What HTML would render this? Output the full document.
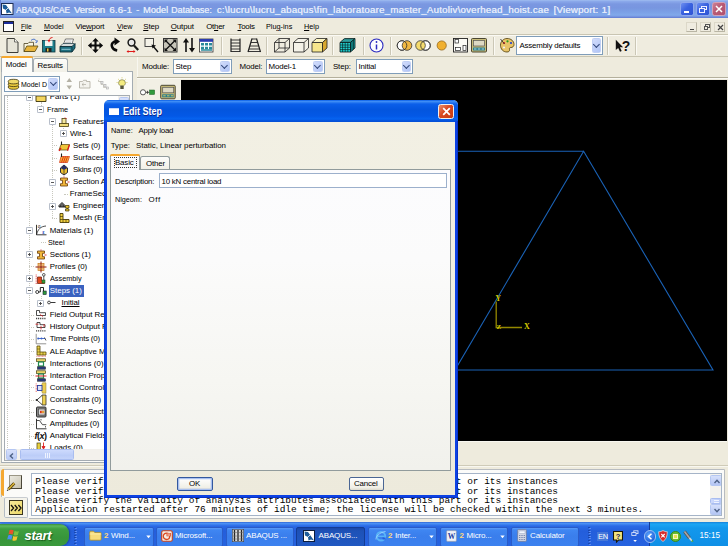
<!DOCTYPE html><html><head><meta charset="utf-8"><title>ABAQUS</title><style>
*{box-sizing:border-box;margin:0;padding:0}
html,body{width:728px;height:546px;overflow:hidden;background:#eeebdd}
body{position:relative;font-family:"Liberation Sans",sans-serif;font-size:7.9px;color:#000;line-height:10px}
.a{position:absolute}
.t{position:absolute;white-space:nowrap;line-height:10px;height:10px;letter-spacing:-0.14px}
.mono{font-family:"Liberation Mono",monospace}
.combo{position:absolute;background:#fff;border:1px solid #7f9db9}
.combo .btn{position:absolute;right:1px;top:1px;bottom:1px;width:9.5px;border-radius:1.5px;background:linear-gradient(135deg,#d2dcfb,#b0c4f6);border:0.5px solid #c0cff4}
.combo .btn:after{content:"";position:absolute;left:50%;top:50%;margin:-3.6px 0 0 -2.5px;width:3.8px;height:3.8px;border-right:1.8px solid #34497c;border-bottom:1.8px solid #34497c;transform:rotate(45deg)}
.sep{position:absolute;background:#cbc7b6;border-right:1px solid #fbfaf4;width:2px}
u{text-decoration:underline}
</style></head><body>
<div class="a" style="left:0;top:0;width:728px;height:18px;background:linear-gradient(#a0bdf0 0,#8aa8ea 1.5px,#7b98e1 4px,#7896e0 8px,#7ba0e6 12px,#80a9ea 15px,#7a9be4 16.3px,#6783d6 17.2px,#6783d6 18px)"></div>
<div class="a" style="left:0;top:0;width:1px;height:18.5px;background:#6a84d8"></div>
<svg class="a" style="left:1px;top:2.5px" width="13" height="12" viewBox="0 0 13 12"><rect x="0.5" y="0.5" width="11.5" height="11" fill="#fff" stroke="#1c2d55" stroke-width="1"/><path d="M1.5 1.5 L5 2 L11 10.5 L8 9.5 L5.5 10.5 L5 7 L2 5.5 Z" fill="#1d5c9a"/><path d="M3 9 L10 2" stroke="#fff" stroke-width="0.8"/></svg>
<div class="t" style="left:16.1px;top:4.7px;font-size:9.7px;color:#e2eafb;text-shadow:0.35px 0 0 #e2eafb;letter-spacing:0px;transform:scaleX(0.8556);transform-origin:0 0">ABAQUS/CAE</div>
<div class="t" style="left:73.8px;top:4.7px;font-size:9.7px;color:#e2eafb;text-shadow:0.35px 0 0 #e2eafb;letter-spacing:-0.185px">Version</div>
<div class="t" style="left:109.2px;top:4.7px;font-size:9.7px;color:#e2eafb;text-shadow:0.35px 0 0 #e2eafb;letter-spacing:0.152px">6.6-1</div>
<div class="t" style="left:136px;top:4.7px;font-size:9.7px;color:#e2eafb;text-shadow:0.35px 0 0 #e2eafb;letter-spacing:0.000px">-</div>
<div class="t" style="left:143px;top:4.7px;font-size:9.7px;color:#e2eafb;text-shadow:0.35px 0 0 #e2eafb;letter-spacing:0px;transform:scaleX(0.9473);transform-origin:0 0">Model</div>
<div class="t" style="left:171.3px;top:4.7px;font-size:9.7px;color:#e2eafb;text-shadow:0.35px 0 0 #e2eafb;letter-spacing:0px;transform:scaleX(0.9214);transform-origin:0 0">Database:</div>
<div class="t" style="left:216.7px;top:4.7px;font-size:9.7px;color:#e2eafb;text-shadow:0.35px 0 0 #e2eafb;letter-spacing:0.228px">c:\lucru\lucru_abaqus\fin_laboratoare_master_Autoliv\overhead_hoist.cae</div>
<div class="t" style="left:553.5px;top:4.7px;font-size:9.7px;color:#e2eafb;text-shadow:0.35px 0 0 #e2eafb;letter-spacing:0.177px">[Viewport:</div>
<div class="t" style="left:601.5px;top:4.7px;font-size:9.7px;color:#e2eafb;text-shadow:0.35px 0 0 #e2eafb;letter-spacing:0.406px">1]</div>
<div class="a" style="left:680px;top:2px;width:13.5px;height:14px;border:1px solid #8fa8ee;border-radius:2.5px;background:linear-gradient(135deg,#6f90f0,#3a62e0 45%,#2f55d4)"><div class="a" style="left:2.5px;top:8px;width:5px;height:2px;background:#fff"></div></div>
<div class="a" style="left:696px;top:2px;width:13.5px;height:14px;border:1px solid #8fa8ee;border-radius:2.5px;background:linear-gradient(135deg,#6f90f0,#3a62e0 45%,#2f55d4)"><div class="a" style="left:4px;top:2.5px;width:5.5px;height:4.5px;border:0.8px solid #eef;border-top-width:1.3px"></div><div class="a" style="left:2px;top:5px;width:5.5px;height:4.5px;border:0.8px solid #eef;border-top-width:1.3px;background:#3a62e0"></div></div>
<div class="a" style="left:712px;top:2px;width:13.5px;height:14px;border:1px solid #d4a0b4;border-radius:2.5px;background:linear-gradient(135deg,#cc8296,#b85a74 45%,#b05270)"><svg class="a" style="left:1.5px;top:1.8px" width="8" height="8" viewBox="0 0 8 8"><path d="M1 1L7 7M7 1L1 7" stroke="#fff" stroke-width="1.5"/></svg></div>
<div class="a" style="left:0;top:18px;width:728px;height:16.5px;background:#eeebdd"></div>
<div class="a" style="left:3px;top:21px;width:11px;height:10.5px;border:1px solid #222;background:#fff;border-bottom-width:1.5px;border-right-width:1.5px"><div class="a" style="left:0;top:0;width:9px;height:2px;background:#1a2c9c"></div></div>
<div class="t" style="left:21.2px;top:22px;letter-spacing:0px;transform:scaleX(0.8483);transform-origin:0 0"><u>F</u>ile</div>
<div class="t" style="left:44.2px;top:22px;letter-spacing:0px;transform:scaleX(0.9071);transform-origin:0 0"><u>M</u>odel</div>
<div class="t" style="left:75.5px;top:22px;letter-spacing:-0.225px">Vie<u>w</u>port</div>
<div class="t" style="left:116.5px;top:22px;letter-spacing:0px;transform:scaleX(0.9136);transform-origin:0 0"><u>V</u>iew</div>
<div class="t" style="left:143.2px;top:22px;letter-spacing:-0.082px"><u>S</u>tep</div>
<div class="t" style="left:170.7px;top:22px;letter-spacing:-0.080px"><u>O</u>utput</div>
<div class="t" style="left:206.2px;top:22px;letter-spacing:-0.241px">Ot<u>h</u>er</div>
<div class="t" style="left:237.5px;top:22px;letter-spacing:-0.234px"><u>T</u>ools</div>
<div class="t" style="left:266.2px;top:22px;letter-spacing:0px;transform:scaleX(0.9220);transform-origin:0 0">Plu<u>g</u>-ins</div>
<div class="t" style="left:304px;top:22px;letter-spacing:0px;transform:scaleX(0.9232);transform-origin:0 0"><u>H</u>elp</div>
<div class="a" style="left:686px;top:21.5px;width:11px;height:10px;border:0.5px solid #dcd8c8;border-right-color:#b9b5a4;border-bottom-color:#b9b5a4;background:#efece0"><div class="a" style="left:3px;top:6px;width:4px;height:1.2px;background:#444"></div></div>
<div class="a" style="left:700px;top:21.5px;width:11px;height:10px;border:0.5px solid #dcd8c8;border-right-color:#b9b5a4;border-bottom-color:#b9b5a4;background:#efece0"><div class="a" style="left:4px;top:1px;width:4.5px;height:4px;border:0.8px solid #555;border-top-width:1.2px"></div><div class="a" style="left:2.5px;top:3px;width:4.5px;height:4px;border:0.8px solid #555;border-top-width:1.2px;background:#efece0"></div></div>
<div class="a" style="left:714px;top:21.5px;width:11px;height:10px;border:0.5px solid #dcd8c8;border-right-color:#b9b5a4;border-bottom-color:#b9b5a4;background:#efece0"><svg class="a" style="left:1.7px;top:1px" width="7" height="7" viewBox="0 0 7 7"><path d="M1 1L6 6M6 1L1 6" stroke="#444" stroke-width="1.2"/></svg></div>
<div class="a" style="left:0;top:34px;width:728px;height:22.5px;background:#efecdf;border-top:1px solid #c9c5b2;border-bottom:1px solid #c9c5b2"></div>
<div class="a" style="left:0;top:35px;width:728px;height:1px;background:#fbfaf4"></div>
<div class="a" style="left:0;top:56.5px;width:728px;height:1px;background:#fbfaf4"></div>
<svg class="a" style="left:0;top:35px" width="728" height="22" viewBox="0 35 728 22">
<!-- new -->
<path d="M7 38.500h7.500l3.500 3.500v10.500H7z" fill="#e6e4d8" stroke="#3c3c38" stroke-width="1"/><path d="M14.500 38.500v3.500h3.500" fill="#f8f8f2" stroke="#3c3c38" stroke-width="0.700"/>
<!-- open -->
<path d="M24 43.500h4l1-1.200h4.500v9.200H24z" fill="#f8f4e0" stroke="#4a4020" stroke-width="0.800"/><path d="M24 51.500l2.800-5.500h11.200L35 51.500z" fill="#e8b43c" stroke="#5a4a10" stroke-width="0.800"/><path d="M31 40.500c2-2 4.500-1.500 5.500.8" fill="none" stroke="#3a68c8" stroke-width="1"/><path d="M35.500 42.500l1.500-.3.300-1.800" fill="none" stroke="#3a68c8" stroke-width="0.900"/>
<!-- save -->
<rect x="42.500" y="40.500" width="12.500" height="11.500" fill="#1f7f8c" stroke="#10353c" stroke-width="0.800"/><rect x="45" y="40.500" width="7.500" height="5.500" fill="#f4f4f0"/><rect x="45.500" y="48" width="6" height="4" fill="#222"/><rect x="47" y="48.500" width="1.500" height="3" fill="#e8c840"/><path d="M52.500 37.500c-2 .2-3.300 1.200-3.500 3.200" fill="none" stroke="#e01818" stroke-width="1"/><path d="M47.500 40l1.500 2.500 1.500-2.500z" fill="#e01818"/>
<!-- print -->
<path d="M63.500 44l2-5h8l-1.500 5z" fill="#fff" stroke="#444" stroke-width="0.700"/><path d="M65.500 41h6M65 42.500h6" stroke="#888" stroke-width="0.500"/><path d="M60 46.500l3-3h11l1 1.500-3 3.500z" fill="#d8dcdc" stroke="#1a3a44" stroke-width="0.700"/><path d="M60 46.500h12l3-3v4.500l-3 4H60z" fill="#1f6f80" stroke="#0c2c34" stroke-width="0.900"/><path d="M72 46.500v5.500" stroke="#0c2c34" stroke-width="0.700"/><path d="M61.500 49.300h9" stroke="#9fd0dc" stroke-width="0.900"/>
<!-- pan -->
<path d="M95.50 37.90 L98.80 41.60 L96.55 41.60 L96.55 44.45 L99.40 44.45 L99.40 42.20 L103.10 45.50 L99.40 48.80 L99.40 46.55 L96.55 46.55 L96.55 49.40 L98.80 49.40 L95.50 53.10 L92.20 49.40 L94.45 49.40 L94.45 46.55 L91.60 46.55 L91.60 48.80 L87.90 45.50 L91.60 42.20 L91.60 44.45 L94.45 44.45 L94.45 41.60 L92.20 41.60Z" fill="#0a0a0a"/>
<!-- rotate -->
<path d="M117.500 41.800c-3.800-1-6.500 1.500-5.500 4.800.6 2 2.500 3.500 5.200 4" fill="none" stroke="#0a0a0a" stroke-width="2.500"/><path d="M114.500 37.500l5.500 4-5.500 4z" fill="#0a0a0a"/>
<!-- zoom -->
<circle cx="131.500" cy="42.500" r="3.400" fill="#e8e8e8" stroke="#1a1a1a" stroke-width="1.500"/><path d="M134 45.500l4.200 4.500" stroke="#1a1a1a" stroke-width="2.200"/><path d="M127.500 51.500h7" stroke="#e01818" stroke-width="1"/><path d="M126.500 51.500l2-1.500v3zM135.500 51.500l-2-1.500v3z" fill="#e01818"/>
<!-- zoom box -->
<rect x="145" y="38.500" width="8.500" height="8" fill="#f4f2e8" stroke="#333" stroke-width="0.900"/><path d="M152.500 45.500l5.500 6.500" stroke="#111" stroke-width="1.400"/><path d="M151.500 44.500l4.500 1-3.500 3z" fill="#111"/>
<!-- fit -->
<rect x="163.500" y="38.500" width="13.500" height="13.500" fill="#c8c6ba" stroke="#333" stroke-width="1"/><path d="M165.500 40.500l9.500 9.500M175 40.500l-9.500 9.500" stroke="#111" stroke-width="1.300"/><path d="M164.500 39.500h3.500l-3.500 3.500zM176 39.500h-3.500l3.500 3.500zM164.500 51h3.500l-3.500-3.500zM176 51h-3.500l3.500-3.500z" fill="#111"/>
<!-- up-down -->
<path d="M186 52V41" stroke="#111" stroke-width="1.600"/><path d="M183 42.500l3-4.500 3 4.500z" fill="#111"/><path d="M192 38v11" stroke="#111" stroke-width="1.600"/><path d="M189 48l3 4.500 3-4.500z" fill="#111"/>
<!-- grid -->
<rect x="199.500" y="39" width="13.500" height="13" fill="#fff" stroke="#333" stroke-width="0.800"/><rect x="199.500" y="39" width="13.500" height="2.800" fill="#2a3cb0"/><path d="M201 43h3v2.500h-3zM205 43h3v2.500h-3zM209 43h3v2.500h-3zM201 46.700h3v2.500h-3zM205 46.700h3v2.500h-3zM209 46.700h3v2.500h-3z" fill="#2a8a9a"/><path d="M201 50h11" stroke="#2a8a9a" stroke-width="1.500"/>
<!-- ladder -->
<path d="M231 38.500v13.500M240 38.500v13.500" stroke="#222" stroke-width="1.200"/><path d="M231 40h9M231 43h9M231 46h9M231 49h9M231 51.500h9" stroke="#222" stroke-width="0.900"/>
<!-- persp ladder -->
<path d="M252 38.500L248 52M256.500 38.500L260.500 52" stroke="#222" stroke-width="1.200"/><path d="M252 39h4.500M251 42.500h6.500M250 46h8.500M249 49h10.500M248 51.500h12.500" stroke="#222" stroke-width="0.900"/>
<!-- wire cube -->
<path d="M274.500 42.500h10.500v9.500h-10.500zM274.500 42.500l4.500-4h10.500l-4.500 4M285 52l4.500-4v-9.500M279 38.500v9.500h10.500M279 48l-4.500 4" fill="none" stroke="#222" stroke-width="0.800"/>
<!-- hidden cube -->
<path d="M293.500 42.500h10.500v9.500h-10.500zM293.500 42.500l4.500-4h10.500l-4.500 4M304 52l4.500-4v-9.500" fill="#f4f2e8" stroke="#222" stroke-width="0.800"/>
<!-- shaded cube -->
<path d="M312 42.500h10.500v9.500H312z" fill="#f6e68c" stroke="#222" stroke-width="0.800"/><path d="M312 42.500l4.500-4H327l-4.500 4z" fill="#fbf4c0" stroke="#222" stroke-width="0.800"/><path d="M322.500 52l4.500-4v-9.500l-4.500 4z" fill="#d8a830" stroke="#222" stroke-width="0.800"/>
<!-- mesh cube -->
<path d="M340 42.500h10.500v9.500H340z" fill="#22d4d4" stroke="#061818" stroke-width="0.800"/><path d="M340 42.500l4.500-4H355l-4.500 4z" fill="#48e8e8" stroke="#061818" stroke-width="0.800"/><path d="M350.500 52l4.500-4v-9.500l-4.500 4z" fill="#16a8a8" stroke="#061818" stroke-width="0.800"/><path d="M342.600 42.500v9.500M345.200 42.500v9.500M347.800 42.500v9.500M340 45h10.500M340 47.300h10.500M340 49.600h10.500M352 41.200v9.500M353.500 39.800v9.500M341.500 41.200h10.500M343 39.800h10.500" stroke="#061818" stroke-width="0.650"/>
<!-- info -->
<circle cx="376.500" cy="45.500" r="6.500" fill="#fdfdff" stroke="#2a2ac0" stroke-width="1.100"/><path d="M376.500 44.500v5" stroke="#2a2ac0" stroke-width="1.500"/><circle cx="376.500" cy="42" r="0.900" fill="#2a2ac0"/>
<!-- circles 1 -->
<circle cx="402" cy="45.500" r="4.800" fill="#fff" stroke="#333" stroke-width="0.800"/><circle cx="407" cy="45.500" r="4.800" fill="#f0b030" fill-opacity="0.900" stroke="#333" stroke-width="0.800"/><circle cx="402" cy="45.500" r="4.800" fill="none" stroke="#333" stroke-width="0.800"/>
<!-- circles 2 -->
<circle cx="425.500" cy="45.500" r="4.800" fill="#fff" stroke="#333" stroke-width="0.800"/><circle cx="420.500" cy="45.500" r="4.800" fill="#f4d860" fill-opacity="0.900" stroke="#333" stroke-width="0.800"/><circle cx="425.500" cy="45.500" r="4.800" fill="none" stroke="#333" stroke-width="0.800"/>
<!-- ball -->
<circle cx="441.700" cy="45.500" r="4.600" fill="#f0b030" stroke="#8a5a10" stroke-width="0.700"/>
<!-- boxes -->
<rect x="453.500" y="38.500" width="14" height="13.500" fill="#fbfaf4" stroke="#222" stroke-width="0.900"/><rect x="455" y="39.500" width="3.500" height="3.500" fill="#fff" stroke="#222" stroke-width="0.700"/><rect x="455.500" y="47.500" width="5" height="3" fill="#fff" stroke="#222" stroke-width="0.700"/><rect x="463" y="45.500" width="3" height="5" fill="#fff" stroke="#222" stroke-width="0.700"/>
<!-- monitor -->
<rect x="471.500" y="38.500" width="15" height="13.500" rx="1" fill="#c9bd7a" stroke="#4a4632" stroke-width="1"/><rect x="473.500" y="40.500" width="11" height="5.500" fill="#ddd9c4" stroke="#555" stroke-width="0.700"/><rect x="473" y="47.500" width="12" height="3" fill="#2a7c8c"/><path d="M474 49h2.500M477.800 49h2.500M481.600 49h2.500" stroke="#bfe8ee" stroke-width="0.900"/>
<!-- palette -->
<path d="M507 38.500c4 0 7 2.500 7 6 0 2-1.500 3-3 3-1.200 0-1.800.6-1.500 1.800.4 1.500-.5 2.700-2.500 2.700-4 0-6.500-3-6.500-6.800 0-3.700 3-6.700 6.500-6.700z" fill="#e8c468" stroke="#4a3808" stroke-width="0.800"/><circle cx="504" cy="43" r="1.100" fill="#d82020"/><circle cx="507.500" cy="41.300" r="1.100" fill="#20a020"/><circle cx="511" cy="43" r="1.100" fill="#2040d0"/><circle cx="504" cy="47.500" r="1.100" fill="#f0f0f0"/><path d="M500.500 39l4 5" stroke="#333" stroke-width="0.900"/>
<!-- arrow ? -->
<path d="M615.800 39.800v10.200l2.400-2 1.800 3.800 1.700-.8-1.800-3.700h3.200z" fill="#111"/><text x="621.800" y="50.600" font-family="Liberation Sans" font-weight="bold" font-size="14" fill="#111">?</text>
</svg>

<div class="sep" style="left:81px;top:36.5px;height:18.5px"></div>
<div class="sep" style="left:221px;top:36.5px;height:18.5px"></div>
<div class="sep" style="left:266px;top:36.5px;height:18.5px"></div>
<div class="sep" style="left:332px;top:36.5px;height:18.5px"></div>
<div class="sep" style="left:363px;top:36.5px;height:18.5px"></div>
<div class="sep" style="left:390px;top:36.5px;height:18.5px"></div>
<div class="sep" style="left:493px;top:36.5px;height:18.5px"></div>
<div class="sep" style="left:607px;top:36.5px;height:18.5px"></div>
<div class="sep" style="left:635px;top:36.5px;height:18.5px"></div>
<div class="combo" style="left:516px;top:36px;width:87px;height:19px"><div class="t" style="left:2.500px;top:3.800px;letter-spacing:-0.190px">Assembly defaults</div><div class="btn"></div></div>
<div class="a" style="left:0;top:56.5px;width:728px;height:23.5px;background:#eeebdd"></div>
<div class="t" style="left:142px;top:61.5px">Module:</div>
<div class="combo" style="left:173px;top:59px;width:58.5px;height:14.5px"><div class="t" style="left:1.5px;top:1.6px">Step</div><div class="btn"></div></div>
<div class="t" style="left:239.5px;top:61.5px">Model:</div>
<div class="combo" style="left:266px;top:59px;width:58.5px;height:14.5px"><div class="t" style="left:1.5px;top:1.6px">Model-1</div><div class="btn"></div></div>
<div class="t" style="left:333px;top:61.5px">Step:</div>
<div class="combo" style="left:356px;top:59px;width:57px;height:14.5px"><div class="t" style="left:1.5px;top:1.6px">Initial</div><div class="btn"></div></div>
<div class="a" style="left:1px;top:71px;width:131.5px;height:391.5px;background:#fcfcf9;border:1px solid #a4acb2;border-left-color:#b4babc"></div>
<div class="a" style="left:33px;top:58px;width:34.5px;height:13.5px;border:1px solid #a4acb2;border-bottom:none;border-radius:2.5px 2.5px 0 0;background:linear-gradient(#fdfdfb,#f1f0e7)"></div>
<div class="t" style="left:37.5px;top:61px">Results</div>
<div class="a" style="left:1px;top:56px;width:32px;height:16px;border:1px solid #a4acb2;border-bottom:none;border-top:none;border-radius:2.5px 2.5px 0 0;background:#fcfcf9"><div class="a" style="left:-1px;top:0;width:32px;height:2px;background:#f5a830;border-radius:2.5px 2.5px 0 0"></div></div>
<div class="t" style="left:5.8px;top:60px">Model</div>
<div class="combo" style="left:4px;top:75.5px;width:56px;height:16.5px"><svg class="a" style="left:2px;top:1.5px" width="13" height="12" viewBox="0 0 13 12"><ellipse cx="6.5" cy="9" rx="5.3" ry="2.3" fill="#e8c83c" stroke="#3c3410" stroke-width="0.8"/><ellipse cx="6.5" cy="6.3" rx="5.3" ry="2.3" fill="#e8c83c" stroke="#3c3410" stroke-width="0.8"/><ellipse cx="6.5" cy="3.6" rx="5.3" ry="2.3" fill="#f0da6a" stroke="#3c3410" stroke-width="0.8"/></svg><div class="t" style="left:16px;top:3px;letter-spacing:0px;transform:scaleX(0.8848);transform-origin:0 0">Model D</div><div class="btn" style="width:10px"></div></div>
<svg class="a" style="left:64px;top:76px" width="66" height="16" viewBox="64 76 66 16"><path d="M66.5 82 L69.3 78 L72 82Z M66.5 85.5 L69.3 89.5 L72 85.5Z" fill="#b4b1a4"/><path d="M79.5 81.5h3l1-1.2h3v1.2h3.5v6.5h-10.5z" fill="#f4f3ee" stroke="#aeaba0" stroke-width="0.8"/><path d="M82 84.5h4M83.7 83l-1.7 1.5 1.7 1.5" stroke="#aeaba0" stroke-width="0.7" fill="none"/><path d="M98.5 79v2.5h2.5v3h2.5v3h2.5" stroke="#b8b5aa" stroke-width="0.7" fill="none"/><rect x="98" y="78" width="2" height="2" fill="#f4f3ee" stroke="#b0ad a2" stroke-width="0.6"/><rect x="101" y="81.5" width="2" height="2" fill="#eee" stroke="#aaa" stroke-width="0.6"/><rect x="104" y="84.5" width="2" height="2" fill="#eee" stroke="#aaa" stroke-width="0.6"/><rect x="106.3" y="87" width="2" height="2" fill="#eee" stroke="#aaa" stroke-width="0.6"/><path d="M122 78.3v-1M118.8 79.6l-.8-.7M125.2 79.6l.8-.7M117.6 82.5h-1M126.4 82.5h1" stroke="#c8bc40" stroke-width="0.7"/><path d="M120.2 85.8c-1.200-1-1.600-1.900-1.600-2.800a3.400 3.300 0 0 1 6.800 0c0 .9-.4 1.800-1.600 2.800z" fill="#f4ec80" stroke="#7a7a48" stroke-width="0.7"/><rect x="120.300" y="85.800" width="3.400" height="3.200" fill="#55553c"/></svg>
<div class="a" style="left:4px;top:95px;width:125.5px;height:366px;background:#fff;border:1px solid #a5acb2;overflow:hidden" id="tree">
<div class="a" style="left:1.5px;top:0.0px;width:0;height:352.0px;border-left:0.7px dotted #c8c8be"></div>
<div class="a" style="left:24.1px;top:7.0px;width:0;height:345.0px;border-left:0.7px dotted #c8c8be"></div>
<div class="a" style="left:35.6px;top:6.0px;width:0;height:4.0px;border-left:0.7px dotted #c8c8be"></div>
<div class="a" style="left:35.6px;top:200.0px;width:0;height:3.0px;border-left:0.7px dotted #c8c8be"></div>
<div class="a" style="left:47.1px;top:29.0px;width:0;height:93.0px;border-left:0.7px dotted #c8c8be"></div>
<div class="a" style="left:58.4px;top:29.0px;width:0;height:4.0px;border-left:0.7px dotted #c8c8be"></div>
<div class="t" style="left:44.8px;top:-3.6px;letter-spacing:-0.03px;">Parts (1)</div>
<svg class="a" style="left:20.9px;top:-2.2px" width="7" height="7" viewBox="0 0 7 7"><rect x="0.4" y="0.4" width="6.2" height="6.2" rx="0.8" fill="#fff" stroke="#98a2b4" stroke-width="0.8"/><path d="M2 3.5h3" stroke="#444" stroke-width="0.9"/></svg>
<svg class="a" style="left:29.8px;top:-4.7px" width="12" height="12" viewBox="0 0 12 12"><path d="M1 3h3.5l1 1.2H11v6.3H1z" fill="#f3d55e" stroke="#3a3208" stroke-width="0.9"/><path d="M1 5.2h10" stroke="#3a3208" stroke-width="0.6"/></svg>
<div class="t" style="left:42.1px;top:8.5px;letter-spacing:0px;transform:scaleX(0.9251);transform-origin:0 0">Frame</div>
<svg class="a" style="left:32.4px;top:9.9px" width="7" height="7" viewBox="0 0 7 7"><rect x="0.4" y="0.4" width="6.2" height="6.2" rx="0.8" fill="#fff" stroke="#98a2b4" stroke-width="0.8"/><path d="M2 3.5h3" stroke="#444" stroke-width="0.9"/></svg>
<div class="t" style="left:68.0px;top:20.6px;letter-spacing:-0.03px;">Features</div>
<svg class="a" style="left:43.9px;top:22.0px" width="7" height="7" viewBox="0 0 7 7"><rect x="0.4" y="0.4" width="6.2" height="6.2" rx="0.8" fill="#fff" stroke="#98a2b4" stroke-width="0.8"/><path d="M2 3.5h3" stroke="#444" stroke-width="0.9"/></svg>
<svg class="a" style="left:53.0px;top:19.5px" width="12" height="12" viewBox="0 0 12 12"><rect x="1.5" y="7.5" width="9" height="3" fill="#f0dc78" stroke="#4a4010" stroke-width="0.8"/><rect x="4" y="2.5" width="4" height="5" fill="#f4e8a0" stroke="#4a4010" stroke-width="0.8"/><path d="M7 1.5l1.5 1.5" stroke="#d22" stroke-width="0.9"/></svg>
<div class="t" style="left:65.0px;top:32.7px;letter-spacing:-0.149px">Wire-1</div>
<svg class="a" style="left:55.1px;top:34.1px" width="7" height="7" viewBox="0 0 7 7"><rect x="0.4" y="0.4" width="6.2" height="6.2" rx="0.8" fill="#fff" stroke="#98a2b4" stroke-width="0.8"/><path d="M2 3.5h3" stroke="#444" stroke-width="0.9"/><path d="M3.5 2v3" stroke="#444" stroke-width="0.9"/></svg>
<div class="t" style="left:68.0px;top:44.8px;letter-spacing:-0.019px">Sets (0)</div>
<svg class="a" style="left:52.5px;top:43.7px" width="12" height="12" viewBox="0 0 12 12"><path d="M3 4.5h8.5L9.5 10H1z" fill="#efc53a" stroke="#5a4608" stroke-width="0.7"/><path d="M3.5 5V1.5" stroke="#222" stroke-width="1.1"/><path d="M1 10.8L3 8M9.5 10.8l2-6" stroke="#e01818" stroke-width="1.3"/></svg>
<div class="a" style="left:47.4px;top:49.4px;height:0;width:4.6px;border-top:0.7px dotted #c8c8be"></div>
<div class="t" style="left:68.0px;top:56.9px;letter-spacing:-0.03px;">Surfaces</div>
<svg class="a" style="left:52.5px;top:55.8px" width="12" height="12" viewBox="0 0 12 12"><path d="M3 4.5h8.5L9.5 10.5H1.5z" fill="#f3b238" stroke="#d63010" stroke-width="0.7"/><path d="M3.5 5V1.5" stroke="#222" stroke-width="1.1"/><path d="M3.5 10.5l2-6M5.5 10.5l2-6M7.5 10.5l2-6" stroke="#e02810" stroke-width="0.9"/></svg>
<div class="a" style="left:47.4px;top:61.5px;height:0;width:4.6px;border-top:0.7px dotted #c8c8be"></div>
<div class="t" style="left:68.0px;top:69.0px;letter-spacing:-0.204px">Skins (0)</div>
<svg class="a" style="left:52.5px;top:67.9px" width="12" height="12" viewBox="0 0 12 12"><path d="M6 1l3.5 3v4.5L6 11 2.5 8.5V4z" fill="#efc030" stroke="#1a1a2a" stroke-width="0.9"/><path d="M6 1l3.5 3L6 6 2.5 4z" fill="#2a2f66"/><path d="M6 6v5" stroke="#1a1a2a" stroke-width="0.7"/></svg>
<div class="a" style="left:47.4px;top:73.6px;height:0;width:4.6px;border-top:0.7px dotted #c8c8be"></div>
<div class="t" style="left:68.0px;top:81.1px;letter-spacing:-0.03px;">Section Assignments</div>
<svg class="a" style="left:43.9px;top:82.5px" width="7" height="7" viewBox="0 0 7 7"><rect x="0.4" y="0.4" width="6.2" height="6.2" rx="0.8" fill="#fff" stroke="#98a2b4" stroke-width="0.8"/><path d="M2 3.5h3" stroke="#444" stroke-width="0.9"/></svg>
<svg class="a" style="left:52.5px;top:80.0px" width="12" height="12" viewBox="0 0 12 12"><path d="M2.5 2h7v2.3H7.5v3.4h2V10h-7V7.7h2V4.3h-2z" fill="#f1b73a" stroke="#6a3a08" stroke-width="0.8"/><path d="M6 0.5v1M9.5 6h2" stroke="#d22" stroke-width="0.9"/></svg>
<div class="t" style="left:64.8px;top:93.2px;letter-spacing:-0.03px;">FrameSection</div>
<div class="a" style="left:58.7px;top:97.8px;height:0;width:4.6px;border-top:0.7px dotted #c8c8be"></div>
<div class="t" style="left:68.0px;top:105.3px;letter-spacing:-0.03px;">Engineering Features</div>
<svg class="a" style="left:43.9px;top:106.7px" width="7" height="7" viewBox="0 0 7 7"><rect x="0.4" y="0.4" width="6.2" height="6.2" rx="0.8" fill="#fff" stroke="#98a2b4" stroke-width="0.8"/><path d="M2 3.5h3" stroke="#444" stroke-width="0.9"/><path d="M3.5 2v3" stroke="#444" stroke-width="0.9"/></svg>
<svg class="a" style="left:52.5px;top:104.2px" width="12" height="12" viewBox="0 0 12 12"><path d="M1 7V5.5L4 2.5l3 3V7z" fill="#888" stroke="#111" stroke-width="0.9"/><path d="M2.5 7V5M4 7V4M5.5 7V5" stroke="#111" stroke-width="0.6"/><path d="M7.5 5.5H11V8H9.5v1H11v2H7.5V9H9V8H7.5z" fill="#ecc22e" stroke="#3a3005" stroke-width="0.7"/></svg>
<div class="t" style="left:68.0px;top:117.4px;letter-spacing:-0.03px;">Mesh (Empty)</div>
<svg class="a" style="left:53.0px;top:116.3px" width="12" height="12" viewBox="0 0 12 12"><path d="M2 1.5h3v6h6v3H2z" fill="#f0d040" stroke="#4a3c08" stroke-width="0.9"/><path d="M2 4.5h3M2 7.5h3M5 7.5v3M8 7.5v3" stroke="#4a3c08" stroke-width="0.7"/></svg>
<div class="a" style="left:47.4px;top:122.0px;height:0;width:5.1px;border-top:0.7px dotted #c8c8be"></div>
<div class="t" style="left:44.8px;top:129.5px;letter-spacing:-0.029px">Materials (1)</div>
<svg class="a" style="left:20.9px;top:130.9px" width="7" height="7" viewBox="0 0 7 7"><rect x="0.4" y="0.4" width="6.2" height="6.2" rx="0.8" fill="#fff" stroke="#98a2b4" stroke-width="0.8"/><path d="M2 3.5h3" stroke="#444" stroke-width="0.9"/></svg>
<svg class="a" style="left:29.8px;top:128.4px" width="12" height="12" viewBox="0 0 12 12"><path d="M1.5 0.8v10h10" fill="none" stroke="#222" stroke-width="0.9"/><path d="M1.5 10.8C3 5 5.5 2.5 11 2" fill="none" stroke="#222" stroke-width="0.8"/><text x="2.8" y="4.2" font-size="4.5" font-family="Liberation Sans" fill="#111">σ</text><text x="7.2" y="9.8" font-size="5" font-family="Liberation Sans" fill="#1a3cc0" font-weight="bold">ε</text></svg>
<div class="t" style="left:42.5px;top:141.6px;letter-spacing:0px;transform:scaleX(0.9168);transform-origin:0 0">Steel</div>
<div class="a" style="left:35.9px;top:146.2px;height:0;width:5.1px;border-top:0.7px dotted #c8c8be"></div>
<div class="t" style="left:44.8px;top:153.7px;letter-spacing:-0.082px">Sections (1)</div>
<svg class="a" style="left:20.9px;top:155.1px" width="7" height="7" viewBox="0 0 7 7"><rect x="0.4" y="0.4" width="6.2" height="6.2" rx="0.8" fill="#fff" stroke="#98a2b4" stroke-width="0.8"/><path d="M2 3.5h3" stroke="#444" stroke-width="0.9"/><path d="M3.5 2v3" stroke="#444" stroke-width="0.9"/></svg>
<svg class="a" style="left:29.8px;top:152.6px" width="12" height="12" viewBox="0 0 12 12"><path d="M2.5 2h7v2.3H7.5v3.4h2V10h-7V7.7h2V4.3h-2z" fill="#f1b73a" stroke="#6a3a08" stroke-width="0.8"/><path d="M6 0.5v1M9.5 6h2" stroke="#d22" stroke-width="0.9"/></svg>
<div class="t" style="left:44.8px;top:165.8px;letter-spacing:-0.068px">Profiles (0)</div>
<svg class="a" style="left:29.8px;top:164.7px" width="12" height="12" viewBox="0 0 12 12"><rect x="3" y="2.5" width="6" height="7" fill="#f4c890" stroke="#c8781c" stroke-width="0.7"/><path d="M0.5 6h11M6 0.5v11" stroke="#8a1a10" stroke-width="1"/><path d="M3 4.2h6M3 7.8h6" stroke="#d88a30" stroke-width="0.6"/></svg>
<div class="a" style="left:24.4px;top:170.4px;height:0;width:4.9px;border-top:0.7px dotted #c8c8be"></div>
<div class="t" style="left:44.8px;top:177.9px;letter-spacing:0px;transform:scaleX(0.9236);transform-origin:0 0">Assembly</div>
<svg class="a" style="left:20.9px;top:179.3px" width="7" height="7" viewBox="0 0 7 7"><rect x="0.4" y="0.4" width="6.2" height="6.2" rx="0.8" fill="#fff" stroke="#98a2b4" stroke-width="0.8"/><path d="M2 3.5h3" stroke="#444" stroke-width="0.9"/><path d="M3.5 2v3" stroke="#444" stroke-width="0.9"/></svg>
<svg class="a" style="left:29.8px;top:176.8px" width="12" height="12" viewBox="0 0 12 12"><path d="M2.5 4v6.5h7V7.5h-3V4z" fill="#e0461c" stroke="#6a1a08" stroke-width="0.7"/><path d="M1.2 1.5v9.5" stroke="#d22" stroke-width="0.8" stroke-dasharray="1 0.7"/><rect x="7" y="7" width="3" height="3" fill="#3a9a3a" stroke="#154a15" stroke-width="0.5"/><circle cx="8.8" cy="1.8" r="1.3" fill="#fff" stroke="#111" stroke-width="0.7"/><path d="M8.8 3v4" stroke="#111" stroke-width="0.7"/></svg>
<div class="a" style="left:44.1px;top:189.0px;width:34.6px;height:11.6px;background:#3a62c0"></div>
<div class="t" style="left:44.8px;top:190.0px;color:#fff;letter-spacing:0.009px">Steps (1)</div>
<svg class="a" style="left:20.9px;top:191.4px" width="7" height="7" viewBox="0 0 7 7"><rect x="0.4" y="0.4" width="6.2" height="6.2" rx="0.8" fill="#fff" stroke="#98a2b4" stroke-width="0.8"/><path d="M2 3.5h3" stroke="#444" stroke-width="0.9"/></svg>
<svg class="a" style="left:29.8px;top:188.9px" width="12" height="12" viewBox="0 0 12 12"><circle cx="2.2" cy="7" r="1.5" fill="#fff" stroke="#111" stroke-width="0.8"/><path d="M3.8 7h1.5V2.5h3.2V7" fill="none" stroke="#111" stroke-width="0.9"/><rect x="8" y="6" width="3.2" height="3.5" fill="#2f9a3c" stroke="#123" stroke-width="0.6"/></svg>
<div class="t" style="left:56.5px;top:202.1px;letter-spacing:-0.056px"><u>Initial</u></div>
<svg class="a" style="left:32.4px;top:203.5px" width="7" height="7" viewBox="0 0 7 7"><rect x="0.4" y="0.4" width="6.2" height="6.2" rx="0.8" fill="#fff" stroke="#98a2b4" stroke-width="0.8"/><path d="M2 3.5h3" stroke="#444" stroke-width="0.9"/><path d="M3.5 2v3" stroke="#444" stroke-width="0.9"/></svg>
<svg class="a" style="left:41.5px;top:201.0px" width="12" height="12" viewBox="0 0 12 12"><circle cx="2" cy="5.5" r="1.4" fill="#fff" stroke="#222" stroke-width="0.8"/><path d="M3.5 5.5H8.5" stroke="#222" stroke-width="0.9"/></svg>
<div class="t" style="left:44.8px;top:214.2px;letter-spacing:-0.03px;">Field Output Requests</div>
<svg class="a" style="left:29.8px;top:213.1px" width="12" height="12" viewBox="0 0 12 12"><path d="M1.5 1.5h3v2.2h6V6.5h-9z" fill="#fff" stroke="#222" stroke-width="0.8"/><path d="M1 9.5h10" stroke="#444" stroke-width="1.3" stroke-dasharray="1.1 0.8"/><path d="M5 5.5l3 2" stroke="#d22" stroke-width="0.8"/></svg>
<div class="a" style="left:24.4px;top:218.8px;height:0;width:4.9px;border-top:0.7px dotted #c8c8be"></div>
<div class="t" style="left:44.8px;top:226.3px;letter-spacing:-0.03px;">History Output Requests</div>
<svg class="a" style="left:29.8px;top:225.2px" width="12" height="12" viewBox="0 0 12 12"><path d="M2 1.5h3v2.2h5V6.5H2z" fill="#fff" stroke="#222" stroke-width="0.8"/><path d="M1 9.8h10" stroke="#444" stroke-width="1.3" stroke-dasharray="1.1 0.8"/><path d="M0.5 3.2h3M6 5v3.5M9 3v3" stroke="#d22" stroke-width="0.8"/></svg>
<div class="a" style="left:24.4px;top:230.9px;height:0;width:4.9px;border-top:0.7px dotted #c8c8be"></div>
<div class="t" style="left:44.8px;top:238.4px;letter-spacing:-0.208px">Time Points (0)</div>
<svg class="a" style="left:29.8px;top:237.3px" width="12" height="12" viewBox="0 0 12 12"><path d="M1.2 0.8v10h10" fill="none" stroke="#888" stroke-width="0.9"/><path d="M3 5.5h7" stroke="#3a62c8" stroke-width="0.9"/><circle cx="3.2" cy="5.5" r="1" fill="#3a62c8"/><circle cx="6.5" cy="5.5" r="0.9" fill="#3a62c8"/><path d="M9.5 4.5l1.5 3" stroke="#222" stroke-width="0.8"/></svg>
<div class="a" style="left:24.4px;top:243.0px;height:0;width:4.9px;border-top:0.7px dotted #c8c8be"></div>
<div class="t" style="left:44.8px;top:250.5px;letter-spacing:-0.03px;">ALE Adaptive Mesh</div>
<svg class="a" style="left:29.8px;top:249.4px" width="12" height="12" viewBox="0 0 12 12"><path d="M2 1h3v6h6v3H2z" fill="#ead24a" stroke="#5a4a0a" stroke-width="0.8"/><path d="M5 7v3M8 7v3M2 4h3M2 7h3" stroke="#5a4a0a" stroke-width="0.6"/><path d="M1.5 11.2h9.5" stroke="#d22" stroke-width="0.8" stroke-dasharray="0.8 0.6"/></svg>
<div class="a" style="left:24.4px;top:255.1px;height:0;width:4.9px;border-top:0.7px dotted #c8c8be"></div>
<div class="t" style="left:44.8px;top:262.6px;letter-spacing:0.078px">Interactions (0)</div>
<svg class="a" style="left:29.8px;top:261.5px" width="12" height="12" viewBox="0 0 12 12"><rect x="1.5" y="0.8" width="9" height="2.6" fill="#e8d46a" stroke="#4a4010" stroke-width="0.7"/><rect x="3.5" y="4" width="5" height="4" fill="#fff" stroke="#1f8a50" stroke-width="1.2"/><rect x="2.5" y="8.8" width="8" height="2.4" fill="#2a3a7a" stroke="#111" stroke-width="0.5"/></svg>
<div class="a" style="left:24.4px;top:267.2px;height:0;width:4.9px;border-top:0.7px dotted #c8c8be"></div>
<div class="t" style="left:44.8px;top:274.7px;letter-spacing:-0.03px;">Interaction Properties</div>
<svg class="a" style="left:29.8px;top:273.6px" width="12" height="12" viewBox="0 0 12 12"><rect x="1.5" y="0.8" width="9" height="2.6" fill="#e8d46a" stroke="#4a4010" stroke-width="0.7"/><rect x="3.5" y="4" width="5" height="4" fill="#fff" stroke="#1f8a50" stroke-width="1.2"/><path d="M0.5 6h11" stroke="#d22" stroke-width="1"/><rect x="2.5" y="8.8" width="8" height="2.4" fill="#2a3a7a" stroke="#111" stroke-width="0.5"/></svg>
<div class="a" style="left:24.4px;top:279.3px;height:0;width:4.9px;border-top:0.7px dotted #c8c8be"></div>
<div class="t" style="left:44.8px;top:286.8px;letter-spacing:-0.03px;">Contact Controls</div>
<svg class="a" style="left:29.8px;top:285.7px" width="12" height="12" viewBox="0 0 12 12"><path d="M7.5 0.8h3.5v10.4H7.5C6 9 6 3 7.5 0.8z" fill="#eccc50" stroke="#8a7a30" stroke-width="0.5"/><rect x="2.5" y="3.5" width="4.5" height="5" fill="#dde4f6" stroke="#2a3ea0" stroke-width="0.9"/><path d="M1.2 1.5v9" stroke="#d22" stroke-width="0.8" stroke-dasharray="0.8 0.7"/></svg>
<div class="a" style="left:24.4px;top:291.4px;height:0;width:4.9px;border-top:0.7px dotted #c8c8be"></div>
<div class="t" style="left:44.8px;top:298.9px;letter-spacing:-0.025px">Constraints (0)</div>
<svg class="a" style="left:29.8px;top:297.8px" width="12" height="12" viewBox="0 0 12 12"><path d="M7 1h4v10H7z" fill="#eed050" stroke="#333" stroke-width="0.8"/><path d="M7 1.5L1.8 6 7 10.5" fill="#fff" stroke="#222" stroke-width="0.8"/><rect x="0.8" y="5" width="2" height="2" fill="#333"/></svg>
<div class="a" style="left:24.4px;top:303.5px;height:0;width:4.9px;border-top:0.7px dotted #c8c8be"></div>
<div class="t" style="left:44.8px;top:311.0px;letter-spacing:-0.03px;">Connector Sections</div>
<svg class="a" style="left:29.8px;top:309.9px" width="12" height="12" viewBox="0 0 12 12"><rect x="1.5" y="1" width="9.5" height="10" rx="1" fill="#888" stroke="#222" stroke-width="0.9"/><rect x="3.5" y="3" width="6.5" height="6" fill="#ddd" stroke="#333" stroke-width="0.6"/><rect x="5" y="4.8" width="4" height="2.4" fill="#d83020"/><rect x="6.5" y="5.3" width="3" height="1.4" fill="#e8c840"/></svg>
<div class="a" style="left:24.4px;top:315.6px;height:0;width:4.9px;border-top:0.7px dotted #c8c8be"></div>
<div class="t" style="left:44.8px;top:323.1px;letter-spacing:-0.106px">Amplitudes (0)</div>
<svg class="a" style="left:29.8px;top:322.0px" width="12" height="12" viewBox="0 0 12 12"><path d="M1.5 0.8v10h10" fill="none" stroke="#222" stroke-width="0.9"/><path d="M1.5 2.5h3l3 4.2h3.8" fill="none" stroke="#222" stroke-width="0.8"/><path d="M6 1v1.5M10.5 8v1.5" stroke="#222" stroke-width="0.7"/></svg>
<div class="a" style="left:24.4px;top:327.7px;height:0;width:4.9px;border-top:0.7px dotted #c8c8be"></div>
<div class="t" style="left:44.8px;top:335.2px;letter-spacing:-0.03px;">Analytical Fields</div>
<div class="t" style="left:44.8px;top:347.3px;letter-spacing:-0.03px;">Loads (0)</div>
<svg class="a" style="left:29.8px;top:346.2px" width="12" height="12" viewBox="0 0 12 12"><rect x="2" y="1" width="3.3" height="9" fill="#e8d040" stroke="#4a4010" stroke-width="0.7"/><path d="M8.5 0.5v6M7 4.5l1.5 2.5L10 4.5z" stroke="#d22" fill="#d22" stroke-width="0.9"/></svg>
<div class="a" style="left:24.4px;top:351.9px;height:0;width:4.9px;border-top:0.7px dotted #c8c8be"></div>
<div class="t" style="left:29.4px;top:335.2px;letter-spacing:-0.03px;font-size:9px;letter-spacing:-0.5px;color:#111"><i><b>f</b></i><b>(</b><i><b>x</b></i><b>)</b></div>
<div class="a" style="left:24.4px;top:339.8px;height:0;width:4.6px;border-top:0.7px dotted #c8c8be"></div>
<div class="a" style="left:113px;top:0;width:11.5px;height:352px;background:#f3f1ec"></div>
<div class="a" style="left:113.5px;top:0.5px;width:10.5px;height:10.5px;background:linear-gradient(#d6e0fb,#b4c6f4);border:0.5px solid #b5c7f2;border-radius:1.5px"></div>
<div class="a" style="left:0;top:352.5px;width:125px;height:12px;background:#f3f1ec"></div>
<div class="a" style="left:0.5px;top:353px;width:11px;height:11px;background:linear-gradient(#d6e0fb,#b9caf5);border:0.5px solid #b5c7f2;border-radius:1.5px"><svg class="a" style="left:2.5px;top:2.5px" width="5" height="6" viewBox="0 0 5 6"><path d="M4 0.5L1.3 3L4 5.5" fill="none" stroke="#4d6185" stroke-width="1.4"/></svg></div>
<div class="a" style="left:14.5px;top:353px;width:54px;height:11px;background:linear-gradient(#cddafd,#bccdf8 60%,#c4d3fa);border:0.5px solid #a9bdf0;border-radius:1.5px"><div class="a" style="left:24px;top:3px;width:5px;height:4.5px;border-left:0.8px solid #eef3ff;border-right:0.8px solid #eef3ff"><div class="a" style="left:1.2px;top:0;width:0.8px;height:4.5px;background:#eef3ff"></div></div></div>
</div>
<div class="a" style="left:137px;top:77px;width:591px;height:1px;background:#b4b09c"></div><div class="a" style="left:137px;top:78px;width:591px;height:1px;background:#fbfaf4"></div><div class="a" style="left:137px;top:79px;width:44px;height:384px;background:#f2f0e5"></div><div class="a" style="left:136.5px;top:57px;width:1px;height:20px;background:#f8f7f0"></div>
<div class="a" style="left:181px;top:80px;width:545.5px;height:361px;background:#000"></div>
<svg class="a" style="left:181px;top:80px" width="546" height="361" viewBox="181 80 546 361">
<path d="M400 151.3 L583.6 151.3 M583.6 151.3 L713 370 L455 370 Z" fill="none" stroke="#1a62b6" stroke-width="1.1"/>
<path d="M496.2 301.5 L496.2 327.5 L522 327.5" fill="none" stroke="#948800" stroke-width="1.3"/>
<text x="495.6" y="301.2" font-family="Liberation Serif" font-weight="bold" font-size="7.5" fill="#d6cc00">Y</text>
<text x="524" y="329" font-family="Liberation Serif" font-weight="bold" font-size="8" fill="#d6cc00">X</text>
<text x="496.6" y="329.2" font-family="Liberation Serif" font-weight="bold" font-size="7" fill="#d6cc00">Z</text>
</svg>
<!-- toolbox icons -->
<svg class="a" style="left:140px;top:82px" width="40" height="20" viewBox="0 0 40 20">
<circle cx="3" cy="10.3" r="2.6" fill="#fff" stroke="#333" stroke-width="0.8"/><path d="M5.8 10.3H9.500" stroke="#333" stroke-width="0.9"/><path d="M7.500 8.800v3" stroke="#333" stroke-width="0.800"/><rect x="9.600" y="8" width="5" height="4.500" fill="#2f9a3c" stroke="#1c5f25" stroke-width="0.500"/>
<g transform="translate(0.200,0.800)"><rect x="20.5" y="2.5" width="14.500" height="13.500" rx="1" fill="#c9bd7a" stroke="#4a4632" stroke-width="1"/>
<rect x="22.5" y="4.5" width="11" height="5.5" fill="#ddd9c4" stroke="#555" stroke-width="0.7"/>
<rect x="22" y="11.5" width="11.500" height="3" fill="#2a7c8c"/>
<path d="M23 13h2.5M26.8 13h2.5M30.6 13h2.5" stroke="#e8d060" stroke-width="0.9"/></g>
</svg>
<!-- strip below viewport -->
<div class="a" style="left:0;top:465.5px;width:728px;height:1px;background:#f8f7f0"></div><div class="a" style="left:181px;top:441px;width:545.5px;height:1px;background:#f8f7f0"></div>
<div class="a" style="left:0;top:464.5px;width:728px;height:1px;background:#cfcbb8"></div>

<!-- message area -->
<div class="a" style="left:1px;top:468.5px;width:724px;height:50.5px;background:#fbfbf9;border:1px solid #b8bcc0;border-radius:3px 0 0 0"></div>
<div class="a" style="left:1px;top:469px;width:2.8px;height:27px;background:#f5a830;border-radius:3px 0 0 3px"></div>
<div class="a" style="left:1px;top:496.5px;width:3px;height:23px;background:#eeebdd"></div>
<div class="a" style="left:3.5px;top:496.5px;width:24.5px;height:21.5px;background:#f5f4ec;border:1px solid #b4bcc4;border-radius:2px 2px 2px 2px;border-top-color:#c8ccd0"></div>
<div class="a" style="left:1px;top:518px;width:28px;height:2px;background:#eeebdd"></div>
<!-- tab icons -->
<div class="a" style="left:8.5px;top:474.5px;width:13px;height:14px;background:linear-gradient(135deg,#ebe9df,#d6d3c4 60%,#c4c0ae);border:1px solid #4a4638;border-top-color:#9a9684;border-left-color:#9a9684"></div>
<svg class="a" style="left:6px;top:480px" width="12" height="12" viewBox="0 0 12 12"><path d="M2.3 9.300L8.300 3.300" stroke="#4a3a08" stroke-width="3"/><path d="M2.300 9.300L8.300 3.300" stroke="#e4bc3c" stroke-width="1.600"/><path d="M3.500 8.200l1 1M5 6.700l1 1M6.500 5.200l1 1" stroke="#6a5410" stroke-width="0.600"/><path d="M0.800 11l1.800-.5-1.200-1.200z" fill="#222"/></svg>
<div class="a" style="left:8.5px;top:500px;width:14.5px;height:14.5px;background:linear-gradient(135deg,#f6ea98,#ecd868);border:1px solid #3a3620"></div>
<svg class="a" style="left:10px;top:503.5px" width="12" height="8" viewBox="0 0 12 8"><path d="M1 1l2.600 3L1 7M4.700 1l2.600 3-2.600 3M8.400 1L11 4 8.400 7" fill="none" stroke="#111" stroke-width="1.300"/></svg>
<!-- text box -->
<div class="a" style="left:31px;top:473px;width:691px;height:43px;background:#fff;border:1px solid #a5b4c8;overflow:hidden">
<div class="t mono" style="left:3.3px;top:3.2px;font-size:9.47px;line-height:9.35px;letter-spacing:0;height:auto;white-space:pre;color:#000">Please verify the validity of analysis attributes associated with this part or its instances
Please verify the validity of analysis attributes associated with this part or its instances
Please verify the validity of analysis attributes associated with this part or its instances
Application restarted after 76 minutes of idle time; the license will be checked within the next 3 minutes.</div>
<!-- scrollbar -->
<div class="a" style="left:677.5px;top:0;width:12.5px;height:41px;background:#f4f3ee"></div>
<div class="a" style="left:678px;top:0.5px;width:11.5px;height:11.5px;background:linear-gradient(#d6e0fb,#b4c6f4);border:0.5px solid #b5c7f2;border-radius:1.5px"><svg class="a" style="left:2.5px;top:3px" width="6" height="5" viewBox="0 0 6 5"><path d="M0.5 4L3 1.3L5.5 4" fill="none" stroke="#4d6185" stroke-width="1.4"/></svg></div>
<div class="a" style="left:678px;top:23.5px;width:11.5px;height:6.5px;background:linear-gradient(90deg,#cddafd,#b9caf6);border:0.5px solid #a9bdf0;border-radius:1.5px"><div class="a" style="left:3px;top:1.5px;width:5px;height:2.6px;border-top:0.8px solid #eef3ff;border-bottom:0.8px solid #eef3ff"></div></div>
<div class="a" style="left:678px;top:30px;width:11.5px;height:11px;background:linear-gradient(#d6e0fb,#b4c6f4);border:0.5px solid #b5c7f2;border-radius:1.5px"><svg class="a" style="left:2.5px;top:3px" width="6" height="5" viewBox="0 0 6 5"><path d="M0.5 1L3 3.7L5.5 1" fill="none" stroke="#4d6185" stroke-width="1.4"/></svg></div>
</div>

<div class="a" style="left:0;top:521.5px;width:728px;height:24.5px;background:linear-gradient(#3168d5 0,#4a90f4 1.5px,#2a6ae6 4px,#245edb 9px,#2663e0 24.5px)"></div>
<div class="a" style="left:649px;top:521.5px;width:79px;height:24.5px;background:linear-gradient(#1680d8 0,#1ba6f4 2px,#1298ec 6px,#0f8fe6 24.5px);border-left:1px solid #123c9c"></div>
<div class="a" style="left:0;top:524px;width:68.5px;height:22px;border-radius:0 9px 9px 0;background:linear-gradient(#3a8e3a 0,#5cb85c 2px,#3f9f40 5px,#37953a 14px,#3a9a3c 24px);box-shadow:1px 0 2px #173e9a"></div>
<svg class="a" style="left:7px;top:528px" width="15" height="15" viewBox="0 0 15 15"><path d="M2.5 2.2c1.6-.8 3-.6 4.2.2L5.7 6.6C4.5 5.8 3 5.7 1.5 6.4z" fill="#e8532c"/><path d="M7.6 2.8c1.3.8 2.8.8 4.3.1l-1.1 4.2c-1.4.7-2.9.6-4.2-.1z" fill="#7cc242"/><path d="M1.2 7.4c1.6-.8 3-.6 4.2.2L4.4 11.800c-1.200-.8-2.700-.9-4.200-.2z" fill="#4a8ef0"/><path d="M6.300 8c1.300.8 2.800.8 4.300.1L9.500 12.300c-1.400.7-2.900.6-4.200-.1z" fill="#f4c430"/></svg>
<div class="t" style="left:24.5px;top:529.3px;font-size:13px;line-height:13px;height:14px;font-weight:bold;font-style:italic;color:#fff;text-shadow:1px 1px 1px #1a5a1a;letter-spacing:-0.3px">start</div>
<div class="a" style="left:74px;top:527px;width:2px;height:17px;background:repeating-linear-gradient(#1a48b0 0,#1a48b0 1px,transparent 1px,transparent 2.6px)"></div><div class="a" style="left:75.2px;top:528.2px;width:1.5px;height:17px;background:repeating-linear-gradient(#5a8af0 0,#5a8af0 1px,transparent 1px,transparent 2.6px)"></div>
<div class="a" style="left:588px;top:527px;width:2px;height:17px;background:repeating-linear-gradient(#1a48b0 0,#1a48b0 1px,transparent 1px,transparent 2.6px)"></div><div class="a" style="left:589.2px;top:528.2px;width:1.5px;height:17px;background:repeating-linear-gradient(#5a8af0 0,#5a8af0 1px,transparent 1px,transparent 2.6px)"></div>
<div class="a" style="left:83.5px;top:527px;width:70.0px;height:20px;border-radius:2px;background:linear-gradient(#5c9cf8 0,#3f86f2 2px,#3a7eec 8px,#3c82f0 20px);border:0.7px solid #2a5cc8"></div><svg class="a" style="left:89px;top:529.5px" width="13" height="11" viewBox="0 0 13 11"><path d="M0.7 2.2c0-.7.4-1 1-1h3l1 1.200h5.500c.600 0 1 .4 1 1v5.800c0 .6-.4 1-1 1H1.700c-.6 0-1-.4-1-1z" fill="#f6dc7c" stroke="#a88418" stroke-width="0.7"/><path d="M0.700 4h11.500" stroke="#fff0b0" stroke-width="0.800"/></svg><div class="t" style="left:104px;top:530.6px;color:#ffd87a;font-weight:bold;font-size:8px">2</div><div class="t" style="left:111px;top:530.6px;color:#fff;font-size:8px">Wind...</div><svg class="a" style="left:145.5px;top:535px" width="5" height="4" viewBox="0 0 5 4"><path d="M0.3 0.5h4.4L2.5 3.3z" fill="#fff"/></svg>
<div class="a" style="left:156px;top:527px;width:67px;height:20px;border-radius:2px;background:linear-gradient(#5c9cf8 0,#3f86f2 2px,#3a7eec 8px,#3c82f0 20px);border:0.7px solid #2a5cc8"></div><svg class="a" style="left:160.500px;top:529.500px" width="12" height="12" viewBox="0 0 12 12"><rect x="0.700" y="0.700" width="10.600" height="10.600" rx="1.500" fill="#f4ece4" stroke="#c8401c" stroke-width="1.100"/><circle cx="5.500" cy="6.300" r="3.200" fill="none" stroke="#d84820" stroke-width="1.300"/><rect x="5.500" y="3" width="4.500" height="3.300" fill="#e05028"/><path d="M6.300 4h3M6.300 5.200h3" stroke="#fff" stroke-width="0.600"/></svg><div class="t" style="left:175px;top:530.6px;color:#fff;font-size:8px">Microsoft...</div>
<div class="a" style="left:226px;top:527px;width:67.5px;height:20px;border-radius:2px;background:linear-gradient(#5c9cf8 0,#3f86f2 2px,#3a7eec 8px,#3c82f0 20px);border:0.7px solid #2a5cc8"></div><svg class="a" style="left:231.500px;top:529px" width="12" height="13" viewBox="0 0 12 13"><rect x="0.300" y="0.300" width="11.400" height="12.400" fill="#d8d8d8" stroke="#444" stroke-width="0.600"/><path d="M2.500 1v11M6 1v11M9.500 1v11" stroke="#222" stroke-width="1.300"/><path d="M1 3.500h10M1 7h10M1 10h10" stroke="#666" stroke-width="0.500"/></svg><div class="t" style="left:246px;top:530.6px;color:#fff;font-size:8px">ABAQUS ...</div>
<div class="a" style="left:296px;top:527px;width:68.5px;height:20px;border-radius:2px;background:linear-gradient(#1a47a8 0,#1e52b7 3px,#2059c4 20px);border:0.7px solid #143c94"></div><svg class="a" style="left:303px;top:529.500px" width="12" height="12" viewBox="0 0 12 12"><rect x="0.500" y="0.500" width="11" height="11" fill="#fff" stroke="#0c1c3c" stroke-width="1"/><path d="M1.500 1.500L5 2l6 8.500-3-1-2.500 1L5 7 2 5.500z" fill="#1d5c9a"/><path d="M3 9l7-7" stroke="#fff" stroke-width="0.800"/></svg><div class="t" style="left:318.5px;top:530.6px;color:#fff;font-size:8px">ABAQUS...</div>
<div class="a" style="left:367.5px;top:527px;width:69.5px;height:20px;border-radius:2px;background:linear-gradient(#5c9cf8 0,#3f86f2 2px,#3a7eec 8px,#3c82f0 20px);border:0.7px solid #2a5cc8"></div><svg class="a" style="left:375px;top:529.500px" width="12" height="12" viewBox="0 0 12 12"><circle cx="6" cy="6.300" r="4.200" fill="none" stroke="#58b4f8" stroke-width="2"/><path d="M2.500 6.300h6.800" stroke="#58b4f8" stroke-width="1.500"/><path d="M7.500 8.500h3" stroke="#245edb" stroke-width="2"/><path d="M1 9.500C0.500 7 4 2.500 10.500 1.500" fill="none" stroke="#a8d8fc" stroke-width="0.800"/></svg><div class="t" style="left:388px;top:530.6px;color:#ffd87a;font-weight:bold;font-size:8px">2</div><div class="t" style="left:395px;top:530.6px;color:#fff;font-size:8px">Inter...</div><svg class="a" style="left:429px;top:535px" width="5" height="4" viewBox="0 0 5 4"><path d="M0.3 0.5h4.4L2.5 3.3z" fill="#fff"/></svg>
<div class="a" style="left:440px;top:527px;width:67.5px;height:20px;border-radius:2px;background:linear-gradient(#5c9cf8 0,#3f86f2 2px,#3a7eec 8px,#3c82f0 20px);border:0.7px solid #2a5cc8"></div><svg class="a" style="left:446px;top:529.500px" width="11" height="12" viewBox="0 0 11 12"><rect x="0.600" y="0.600" width="9.800" height="10.800" rx="1" fill="#f0f2f8" stroke="#8898b8" stroke-width="0.800"/><text x="1.800" y="9" font-family="Liberation Serif" font-weight="bold" font-size="7.500" fill="#1c3ca0">W</text></svg><div class="t" style="left:459.5px;top:530.6px;color:#ffd87a;font-weight:bold;font-size:8px">2</div><div class="t" style="left:466.5px;top:530.6px;color:#fff;font-size:8px">Micro...</div><svg class="a" style="left:499.5px;top:535px" width="5" height="4" viewBox="0 0 5 4"><path d="M0.3 0.5h4.4L2.5 3.3z" fill="#fff"/></svg>
<div class="a" style="left:510.5px;top:527px;width:68.5px;height:20px;border-radius:2px;background:linear-gradient(#5c9cf8 0,#3f86f2 2px,#3a7eec 8px,#3c82f0 20px);border:0.7px solid #2a5cc8"></div><svg class="a" style="left:517px;top:529px" width="10" height="13" viewBox="0 0 10 13"><rect x="0.600" y="0.600" width="8.800" height="11.800" rx="1" fill="#d4d8e4" stroke="#6878a0" stroke-width="0.800"/><rect x="2" y="2" width="6" height="2.500" fill="#f4f8ff" stroke="#8898b8" stroke-width="0.400"/><path d="M2 6.500h6M2 8.500h6M2 10.500h6" stroke="#7888b0" stroke-width="1" stroke-dasharray="1.400 0.900"/></svg><div class="t" style="left:530px;top:530.6px;color:#fff;font-size:8px">Calculator</div>
<div class="a" style="left:596.500px;top:531.500px;width:11.500px;height:9.500px;background:#4678d8"></div><div class="t" style="left:598px;top:531.700px;color:#fff;font-size:7.500px">EN</div>
<svg class="a" style="left:613px;top:531.200px" width="10" height="12" viewBox="0 0 10 12"><path d="M0.500 0.500h9v8.500H5.500L3.500 11V9H0.500z" fill="#f4e47c" stroke="#1a1808" stroke-width="1.100"/><text x="2.800" y="7.800" font-family="Liberation Sans" font-weight="bold" font-size="7.500" fill="#1a1a5a">?</text></svg>
<svg class="a" style="left:630.500px;top:529.500px" width="9" height="13" viewBox="0 0 9 13"><rect x="2.800" y="0.800" width="4.200" height="2.800" fill="none" stroke="#e8eefc" stroke-width="0.800"/><rect x="0.800" y="2.600" width="4.200" height="2.800" fill="#2a62dc" stroke="#e8eefc" stroke-width="0.800"/><path d="M2.300 10h3.600L4.100 12z" fill="#fff"/></svg>
<div class="a" style="left:643.500px;top:530px;width:12.500px;height:12.500px;border-radius:50%;background:radial-gradient(circle at 40% 35%,#5aa4fc,#2464dc 70%,#164ab8);border:0.600px solid #9cc0f4"></div><svg class="a" style="left:647px;top:533px" width="6" height="7" viewBox="0 0 6 7"><path d="M4.500 0.800L1.500 3.500L4.500 6.200" fill="none" stroke="#fff" stroke-width="1.500"/></svg>
<svg class="a" style="left:657.500px;top:530.200px" width="10" height="12" viewBox="0 0 10 12"><path d="M5 0.500c1.500 1 3 1.200 4.300 1.200 0 4.500-1 7.500-4.300 9.800C1.700 9.200 0.700 6.200 0.700 1.700 2 1.700 3.500 1.500 5 0.500z" fill="#d82c2c" stroke="#e8e8e8" stroke-width="0.700"/><path d="M3.300 4l3.400 3.400M6.700 4L3.300 7.400" stroke="#fff" stroke-width="1.100"/></svg>
<div class="a" style="left:669.500px;top:530.700px;width:11.500px;height:11.500px;border-radius:50%;background:#68bc30;border:0.700px solid #3a8a1c"></div><div class="a" style="left:672.500px;top:533.700px;width:5.500px;height:5.500px;background:#e8e050;border:0.600px solid #f8f8c0"></div>
<svg class="a" style="left:683px;top:530.200px" width="12" height="13" viewBox="0 0 12 13"><path d="M1.500 1.500l5 6.500" stroke="#555" stroke-width="3.200"/><path d="M1.500 1.500l5 6.500" stroke="#a8a8a8" stroke-width="1.600"/><path d="M6.500 8l3 3.500" stroke="#d8d8d8" stroke-width="1.800"/><path d="M8 12l2.500-.5-1-2z" fill="#3a9a3a"/></svg>
<div class="t" style="left:699.500px;top:530.600px;color:#fff;font-size:8.200px;letter-spacing:0">15:15</div>
<!-- dialog -->
<div class="a" style="left:104px;top:100px;width:354px;height:397.5px;background:linear-gradient(#f2f0e4 0,#f1efe2 40%,#edeadc 100%);border-radius:5px 5px 0 0;overflow:hidden;border:0 solid #0831d9" id="dlg">
 <div class="a" style="left:0;top:0;width:354px;height:21.5px;background:linear-gradient(#0a5fe8 0,#3d8cf5 1.5px,#0b5fea 4px,#0355de 10px,#0358e6 16px,#0663f0 19px,#0450d8 21px)"></div>
 <div class="a" style="left:0;top:21px;width:3.3px;height:377px;background:linear-gradient(90deg,#0530d0,#1048e8 60%,#0a3ee0)"></div>
 <div class="a" style="left:351px;top:21px;width:3px;height:377px;background:linear-gradient(90deg,#0a3ee0,#1048e8 40%,#0228c0)"></div>
 <div class="a" style="left:0;top:394.5px;width:354px;height:3px;background:linear-gradient(#0a3ee0,#1048e8 40%,#0228c0)"></div>
 <!-- title icon -->
 <div class="a" style="left:4.5px;top:7.5px;width:10.5px;height:7.5px;background:#fff;border-top:1.5px solid #c8d8f8"></div>
 <div class="t" style="left:19.4px;top:6.6px;font-size:10px;font-weight:bold;color:#fff;text-shadow:0.7px 0.7px 0.5px #0a2a90;letter-spacing:0px;transform:scaleX(0.8998);transform-origin:0 0">Edit Step</div>
 <!-- close -->
 <div class="a" style="left:334px;top:3.5px;width:15.5px;height:15.5px;border:1px solid #f4f0ec;border-radius:2.5px;background:linear-gradient(135deg,#e8906c 0,#d84820 45%,#c43c14 100%)"><svg class="a" style="left:2.5px;top:2.5px" width="9" height="9" viewBox="0 0 9 9"><path d="M1.2 1.2L7.8 7.8M7.8 1.2L1.2 7.8" stroke="#fff" stroke-width="1.7"/></svg></div>
 <!-- body text -->
 <div class="t" style="left:6.7px;top:25.5px;letter-spacing:0px;transform:scaleX(0.9335);transform-origin:0 0">Name:</div>
 <div class="t" style="left:34.5px;top:25.5px;letter-spacing:-0.206px">Apply load</div>
 <div class="t" style="left:6.7px;top:40.5px;letter-spacing:-0.002px">Type:</div>
 <div class="t" style="left:32px;top:40.5px;letter-spacing:-0.014px">Static, Linear perturbation</div>
 <!-- tab panel -->
 <div class="a" style="left:6px;top:68.5px;width:340.5px;height:302.5px;border:1px solid #919b9c;background:linear-gradient(#fcfcfe 0,#fbfbfb 30%,#f6f6f2 70%,#f1f1ec 100%)"></div>
 <!-- Other tab -->
 <div class="a" style="left:36px;top:56px;width:30px;height:13px;border:1px solid #919b9c;border-bottom:none;border-radius:2.5px 2.5px 0 0;background:linear-gradient(#fdfdfb,#f1f0e7)"></div>
 <div class="t" style="left:42px;top:58.5px">Other</div>
 <!-- Basic tab -->
 <div class="a" style="left:6px;top:54px;width:30px;height:15.5px;border:1px solid #919b9c;border-bottom:none;border-top:none;border-radius:2.5px 2.5px 0 0;background:#fcfcfe"><div class="a" style="left:-1px;top:0;width:30px;height:2px;background:#f5a830;border-radius:2.5px 2.5px 0 0"></div>
  <div class="a" style="left:2.5px;top:3px;width:23px;height:11px;border:0.7px dotted #333"></div>
 </div>
 <div class="t" style="left:11px;top:57.7px">Basic</div>
 <div class="t" style="left:11px;top:76.5px;letter-spacing:-0.197px">Description:</div>
 <div class="a" style="left:54.5px;top:73px;width:288.5px;height:15px;background:#fff;border:1px solid #9cb0cc"></div>
 <div class="t" style="left:57.5px;top:76.5px;letter-spacing:-0.213px">10 kN central load</div>
 <div class="t" style="left:11px;top:95px;letter-spacing:0px;transform:scaleX(0.9154);transform-origin:0 0">Nlgeom:</div>
 <div class="t" style="left:44.5px;top:95px;letter-spacing:0.656px">Off</div>
 <!-- buttons -->
 <div class="a" style="left:72.5px;top:377px;width:36px;height:14px;border:1px solid #33589e;border-radius:2px;background:linear-gradient(#fff,#f0efe6 80%,#dcd9cc);box-shadow:inset 0 0 0 1.3px #a8c0f0"></div>
 <div class="t" style="left:85px;top:379.2px">OK</div>
 <div class="a" style="left:244.5px;top:377px;width:35.5px;height:14px;border:1px solid #4a6694;border-radius:2px;background:linear-gradient(#fff,#f0efe6 80%,#dcd9cc)"></div>
 <div class="t" style="left:250px;top:379.2px">Cancel</div>
</div>

</body></html>
